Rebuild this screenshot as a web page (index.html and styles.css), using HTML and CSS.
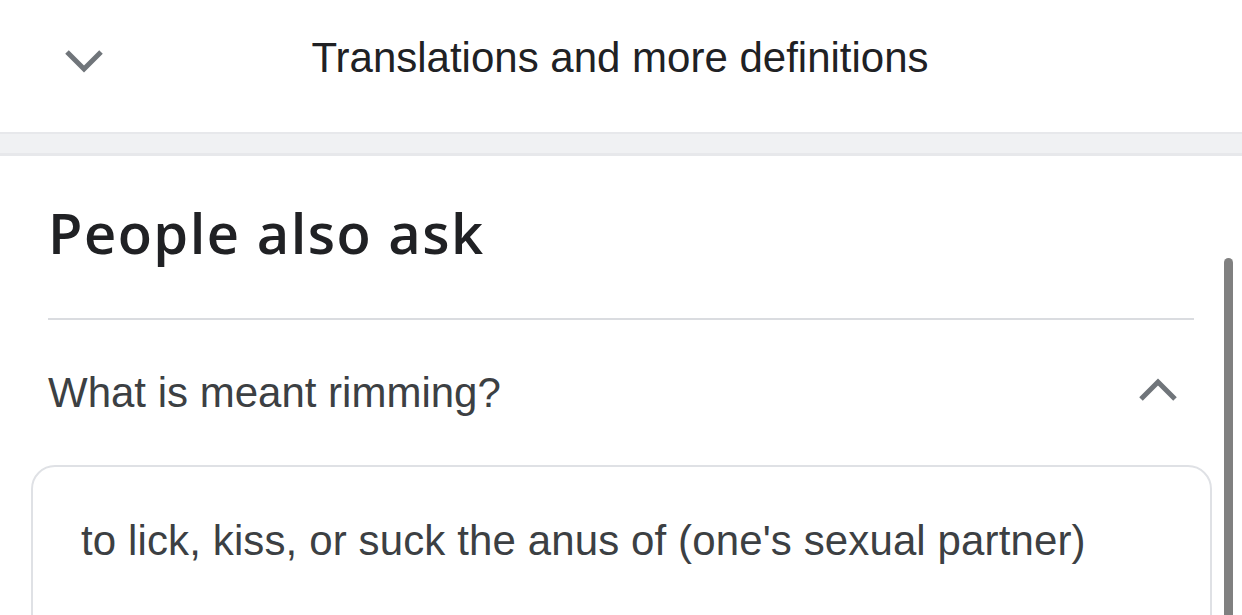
FILE: index.html
```html
<!DOCTYPE html>
<html lang="en">
<head>
<meta charset="utf-8">
<title>People also ask</title>
<link rel="stylesheet" href="styles.css">
</head>
<body>
  <header class="header">
    <svg class="chev chev-down" width="44" height="28" viewBox="0 0 44 28" aria-hidden="true">
      <polyline points="5,6 22,23 39,6" />
    </svg>
    <div class="header-title">Translations and more definitions</div>
    <div class="header-spacer"></div>
  </header>
  <div class="band"></div>
  <section class="paa">
    <h2 class="paa-title">People also ask</h2>
    <div class="divider"></div>
    <div class="question">
      <span class="question-text">What is meant rimming?</span>
      <svg class="chev chev-up" width="44" height="28" viewBox="0 0 44 28" aria-hidden="true">
        <polyline points="5,22 22,5 39,22" />
      </svg>
    </div>
  </section>
  <div class="card">
    <p class="card-text">to lick, kiss, or suck the anus of (one's sexual partner)</p>
  </div>
  <div class="scrollbar"></div>
</body>
</html>
```

FILE: styles.css
```css
html, body {
  margin: 0;
  padding: 0;
  background: #ffffff;
  overflow: hidden;
}

body {
  font-family: "Liberation Sans", Arial, sans-serif;
  color: #202124;
}

.header {
  height: 132px;
  display: grid;
  grid-template-columns: 1fr auto 1fr;
  align-items: start;
  box-sizing: border-box;
}

.chev polyline {
  fill: none;
  stroke: #70757a;
  stroke-width: 5;
  stroke-linejoin: miter;
  stroke-linecap: butt;
}

.chev-down {
  margin-top: 46px;
  margin-left: 62px;
}

.header-title {
  padding-top: 37px;
  margin-left: -2px;
  font-size: 42px;
  line-height: 42px;
  color: #202124;
  white-space: nowrap;
}

.band {
  height: 19px;
  background: #f0f1f3;
  border-top: 2px solid #e7e8eb;
  border-bottom: 3px solid #e7e8eb;
}

.paa {
  padding: 0 48px;
}

.paa-title {
  margin: 48px 0 58px;
  font-family: "Open Sans", "Liberation Sans", sans-serif;
  font-weight: 600;
  font-size: 56px;
  line-height: 56px;
  color: #202124;
  letter-spacing: 1.5px;
}

.divider {
  height: 2px;
  background: #dadce0;
}

.question {
  display: flex;
  justify-content: space-between;
  align-items: flex-start;
  padding-top: 52px;
}

.question-text {
  font-size: 42px;
  line-height: 42px;
  color: #3c4043;
}

.chev-up {
  margin-top: 5px;
  margin-right: 14px;
}

.card {
  margin: 51px 30px 0 31px;
  height: 300px;
  border: 2.5px solid #dfe1e5;
  border-radius: 24px;
  box-sizing: border-box;
  padding: 53px 48px 0;
}

.card-text {
  margin: 0;
  font-size: 42px;
  line-height: 42px;
  color: #3c4043;
  letter-spacing: 0.12px;
}

.scrollbar {
  position: fixed;
  top: 258px;
  bottom: 0;
  right: 9px;
  width: 9px;
  background: #808080;
  border-radius: 5px 5px 0 0;
}
```
